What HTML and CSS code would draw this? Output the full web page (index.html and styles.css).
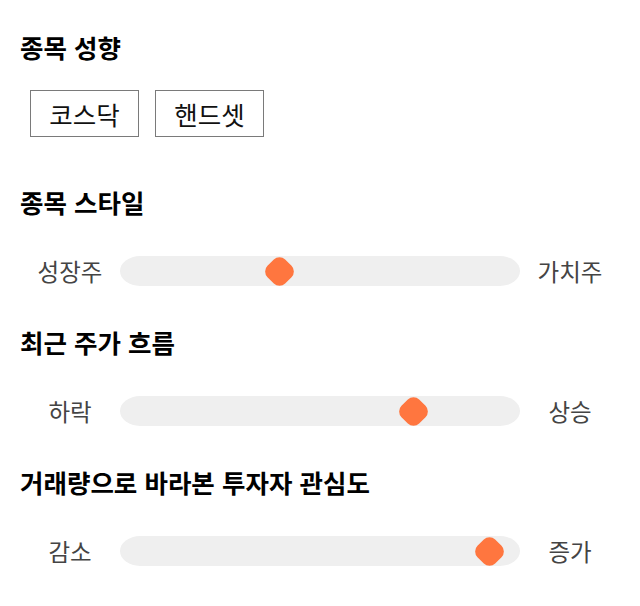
FILE: index.html
```html
<!DOCTYPE html>
<html lang="ko">
<head>
<meta charset="utf-8">
<link rel="stylesheet" href="styles.css">
</head>
<body>
<main class="page">
  <section class="sec sec-first">
    <h2 class="title">종목 성향</h2>
    <div class="chips">
      <button class="chip">코스닥</button>
      <button class="chip">핸드셋</button>
    </div>
  </section>
  <section class="sec sec-a">
    <h2 class="title">종목 스타일</h2>
    <div class="row">
      <span class="label">성장주</span>
      <div class="track"><span class="thumb" style="left:159px"></span></div>
      <span class="label">가치주</span>
    </div>
  </section>
  <section class="sec">
    <h2 class="title">최근 주가 흐름</h2>
    <div class="row">
      <span class="label">하락</span>
      <div class="track"><span class="thumb" style="left:293px"></span></div>
      <span class="label">상승</span>
    </div>
  </section>
  <section class="sec">
    <h2 class="title">거래량으로 바라본 투자자 관심도</h2>
    <div class="row">
      <span class="label">감소</span>
      <div class="track"><span class="thumb" style="left:369px"></span></div>
      <span class="label">증가</span>
    </div>
  </section>
</main>
</body>
</html>
```
FILE: styles.css
```css
* { box-sizing: border-box; }
html, body { margin: 0; padding: 0; background: #fff; }
body {
  font-family: "Noto Sans CJK KR", "Noto Sans", sans-serif;
  color: #000;
}
.page {
  padding: 32px 20px 0 20px;
  display: flex;
  flex-direction: column;
}
.sec { display: flex; flex-direction: column; }
.sec + .sec { margin-top: 41px; }
.sec-first + .sec { margin-top: 50px; }
.title {
  margin: 0;
  font-size: 25.5px;
  line-height: 30px;
  font-weight: 700;
  color: #000;
}
.chips {
  display: flex;
  gap: 16px;
  margin-top: 28px;
  padding-left: 10px;
}
.chip {
  width: 109px;
  height: 47px;
  border: 1px solid #7a7a7a;
  background: #fff;
  font-family: inherit;
  font-size: 25.5px;
  color: #111;
  padding: 0;
  line-height: 1;
}
.row {
  display: flex;
  align-items: center;
  margin-top: 39px;
  height: 30px;
}
.label {
  width: 100px;
  text-align: center;
  font-size: 23.5px;
  color: #444;
  line-height: 30px;
}
.track {
  position: relative;
  width: 400px;
  height: 30px;
  border-radius: 20px / 15px;
  background: #efefef;
}
.thumb {
  position: absolute;
  top: 2.5px;
  width: 25px;
  height: 25px;
  margin-left: -12.5px;
  background: #ff763f;
  border-radius: 8px;
  transform: rotate(45deg);
}
```
